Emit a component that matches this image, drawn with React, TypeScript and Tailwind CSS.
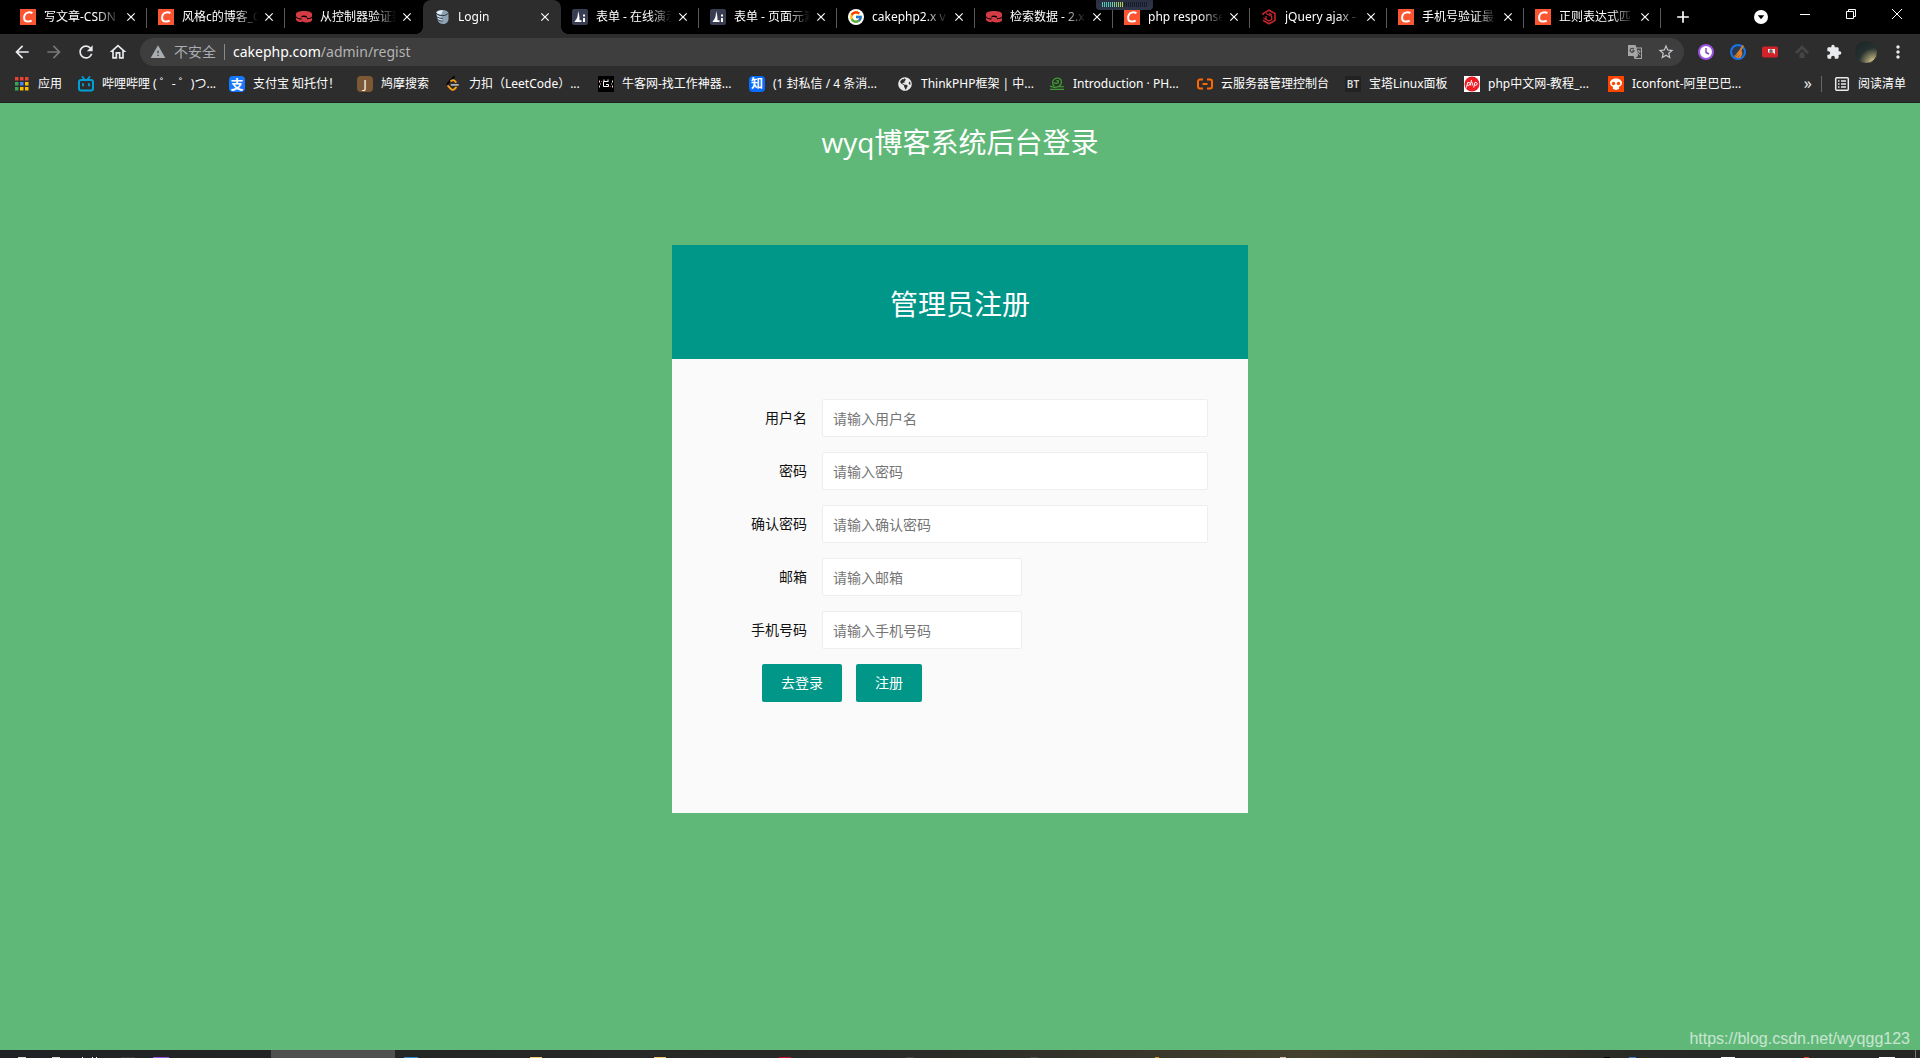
import type { ReactNode } from "react";
import {
  MdArrowBack,
  MdArrowForward,
  MdRefresh,
  MdOutlineHome,
  MdWarning,
  MdStarBorder,
  MdExtension,
  MdMoreVert,
  MdAdd,
  MdClose,
} from "react-icons/md";
import { FcGoogle } from "react-icons/fc";
import { FaGlobeAmericas } from "react-icons/fa";

const svg = "block size-4 shrink-0";

function CsdnIcon() {
  return (
    <svg viewBox="0 0 16 16" className={svg}>
      <rect width="16" height="16" fill="#fc5531" />
      <path d="M12.400 4.300C11.200 3.400 9.300 3.100 7.700 3.600 5.400 4.300 4.100 6.300 4.100 8.700c0 2.400 1.700 3.900 4.100 3.900 1.300 0 2.500-.3 3.500-.9" fill="none" stroke="#fff" strokeWidth="2" />
    </svg>
  );
}

function CakeIcon() {
  return (
    <svg viewBox="0 0 16 16" className={svg}>
      <path d="M0 5c0-2 3.500-3 8-3s8 1 8 3v2.500c-1 1.300-3 1.700-5 1.600V7.200C9 6.300 6.500 6.300 5.500 7v2.500C2.500 9.300 0 8.500 0 7z" fill="#d33c44" />
      <path d="M0 8.700c1.500 1.300 3.500 1.700 5.500 1.800V8.200c2-.5 4-.3 5.500.5v1.500c2 0 4-.4 5-1.400v2.200c0 1.800-3 2.500-6 2.500-2 0-2.500-1.200-4.500-1V13.300C2.500 13 0 12.200 0 10.500z" fill="#d33c44" />
    </svg>
  );
}

function StackIcon() {
  return (
    <svg viewBox="0 0 16 16" className={svg}>
      <path d="M2 4c0-2 3-3 6.500-3S14 2.500 14.500 4v6c0 2.500-2 5-5 5-3.500 0-5-1.500-6-4z" fill="#8fa2b5" />
      <path d="M2 4c1.500 2 4 2.500 6.500 2.500S13 6 14.500 4M2.300 7c2 1.800 4 2.300 6.200 2.300M3.200 10c1.500 1.500 3.500 2 5.300 2" fill="none" stroke="#26313d" strokeWidth="1" />
      <path d="M2.500 3.500C4 1.500 7 1 9 1.500L7 5.500C5 5.500 3 4.700 2.500 3.500zM3 6c1.500 1 3 1.500 4.500 1.700v1C5.500 8.500 4 8 3 7zM4 9c1 .8 2.500 1.300 4 1.400v1C6.500 11.300 5 10.800 4 10z" fill="#e6edf3" />
    </svg>
  );
}

function LayuiIcon() {
  return (
    <svg viewBox="0 0 16 16" className={svg}>
      <rect width="16" height="16" rx="2" fill="#393d52" />
      <path d="M6 2c1 2.500 1.700 6 1.500 9.300H9.500V13H2.500c.3-1.200 1.700-2 2.500-4 .8-2 1-4.500 1-7z" fill="#fff" />
      <path d="M11 5.500h2v2h-2zM11 9h2v4h-2z" fill="#fff" />
    </svg>
  );
}

function HexIcon() {
  return (
    <svg viewBox="0 0 16 16" className={svg} fill="none" stroke="#c8262c">
      <path d="M2 6V4.600L8 1.200l6 3.400v6.800l-6 3.400-6-3.400" strokeWidth="1.600" />
      <path d="M5 4.500l5.700 3v3L8 12l-5.500-3M8 4.200L11 6M5 7v3" strokeWidth="1.300" />
    </svg>
  );
}

function AppsIcon() {
  const colors = ["#ea4335", "#ea4335", "#ea4335", "#34a853", "#4285f4", "#fbbc04", "#34a853", "#fbbc04", "#fbbc04"];
  return (
    <svg viewBox="0 0 16 16" className={svg}>
      {colors.map((c, i) => (
        <rect key={i} x={1 + (i % 3) * 5} y={1 + Math.floor(i / 3) * 5} width="3.500" height="3.500" fill={c} />
      ))}
    </svg>
  );
}

function BilibiliIcon() {
  return (
    <svg viewBox="0 0 16 16" className={svg} fill="none" stroke="#00a1d6" strokeWidth="2" strokeLinecap="round">
      <rect x="1" y="4" width="14" height="10.500" rx="2" />
      <path d="M4.500 1l2 2.500M11.500 1l-2 2.500M5 8v1.500M11 8v1.500" strokeWidth="1.800" />
    </svg>
  );
}

function Badge({ className, children }: { className: string; children: ReactNode }) {
  return <span className={`flex size-4 shrink-0 items-center justify-center leading-none ${className}`}>{children}</span>;
}

function LeetIcon() {
  return (
    <svg viewBox="0 0 16 16" className={svg} fill="none" strokeWidth="1.800" strokeLinecap="round">
      <path d="M9 1L3 7.200c-.8.900-.8 1.700 0 2.600" stroke="#000" />
      <path d="M3 9.800L6 13c1 1 2.500 1 3.500 0l1.500-1.500M6 5c1.500-1.300 3-1 4 .2l.8.800" stroke="#ffa116" />
      <path d="M6.500 8.800H13" stroke="#b3b3b3" />
    </svg>
  );
}

function NowcoderIcon() {
  return (
    <svg viewBox="0 0 16 16" className={svg} fill="none" stroke="#fff" strokeWidth="1">
      <rect width="16" height="16" fill="#000" stroke="none" />
      <path d="M10.500 5.500h-5v5h5v-2H8M6 3.500v1.500M10 3.500v1.500" />
      <path d="M1.500 4.500v2M2.500 7.500v1M1.500 9.500v2M14.500 4.500v2M13.500 7.500v1M14.500 9.500v2" stroke="#ddd" />
      <path d="M3.500 5v1M12.500 10v1" stroke="#e33" />
    </svg>
  );
}

function PhpGuideIcon() {
  return (
    <svg viewBox="0 0 16 16" className={svg} fill="none" stroke="#3f9c35" strokeWidth="1.300">
      <path d="M5.500 10C2.800 8.500 3 4.500 5.500 3 8.500 1 12.500 2.500 12.500 6c0 2-1 3.200-2.500 4M5 6.500c1.500 1.500 4.500 1 4.500-.7C9.500 4.500 8 4.300 7.500 5.300" />
      <path d="M1 10.500c2-.5 3 .8 5 .8s2.500-.8 4-.8 2.500.8 5 0M1 13.300h14" />
    </svg>
  );
}

function AliyunIcon() {
  return (
    <svg viewBox="0 0 16 16" className={svg} fill="none" stroke="#ff6a00" strokeWidth="2">
      <path d="M6 3.500H3A2 2 0 0 0 1 5.500v5a2 2 0 0 0 2 2h3M10 3.500h3a2 2 0 0 1 2 2v5a2 2 0 0 1-2 2h-3M5.500 8h5" />
    </svg>
  );
}

function PhpCnIcon() {
  return (
    <svg viewBox="0 0 16 16" className={svg}>
      <rect width="16" height="16" fill="#fff" />
      <circle cx="8" cy="8" r="7.500" fill="#ee1c25" />
      <g fill="none" stroke="#fff" strokeWidth="1">
        <path d="M2.500 11.500l1.200-5h1.600c1.200.3.700 2.800-.7 2.800H3.400M7.500 4l-1.200 5.500M7 6.700c1-.5 1.800-.3 1.600.8L8.200 9.500M9.700 11.500l1.200-5h1.600c1.200.3.700 2.800-.7 2.800h-1.200" />
      </g>
    </svg>
  );
}

function IconfontIcon() {
  return (
    <svg viewBox="0 0 16 16" className={svg}>
      <rect width="16" height="16" fill="#ff4400" />
      <path d="M8 2.500c3.300 0 6 1.800 6 4.500 0 2-1.500 3.300-3 3.700V13L8 14l-3-1v-2.300C3.500 10.300 2 9 2 7c0-2.700 2.700-4.500 6-4.500z" fill="#fff" />
      <circle cx="5.500" cy="7.500" r="1.700" fill="#ff4400" />
      <circle cx="10.500" cy="7.500" r="1.700" fill="#ff4400" />
    </svg>
  );
}

function ReadingListIcon() {
  return (
    <svg viewBox="0 0 16 16" className={svg} fill="none" stroke="#e8eaed" strokeWidth="1.500">
      <rect x="1.700" y="1.700" width="12.600" height="12.600" rx="1" />
      <path d="M4 5h1.500M4 8h1.500M4 11h1.500M7 5h5M7 8h5M7 11h5" />
    </svg>
  );
}

function TranslateIcon() {
  return (
    <svg viewBox="0 0 16 16" className={svg}>
      <path d="M1 1h7.500l1 2.500H15V15H7.500l-1-3H1z" fill="#a6a6a6" />
      <path d="M9.700 4.500H14V14H8.500l2.500-2z" fill="#3e3e3e" />
      <path d="M6.800 5.200a2 2 0 1 0 .3 1.500H5.300" fill="none" stroke="#3e3e3e" strokeWidth="1.100" />
      <path d="M9.700 7h3.800M11.500 6v1M12.800 7c-.3 1.500-1.300 2.700-2.500 3.500M10.300 8c.6 1.300 1.700 2.500 3 3.300" fill="none" stroke="#a6a6a6" strokeWidth=".9" />
    </svg>
  );
}

function ClockExtension() {
  return (
    <svg viewBox="0 0 16 16" className={svg}>
      <circle cx="8" cy="8" r="7" fill="#fff" stroke="#9b51e0" strokeWidth="2" />
      <path d="M8 4v4.500l3 1.500" fill="none" stroke="#7a3fc0" strokeWidth="1.400" />
    </svg>
  );
}

function BroomExtension() {
  return (
    <svg viewBox="0 0 16 16" className={svg}>
      <circle cx="8" cy="8" r="7" fill="#2a3a50" stroke="#1a73e8" strokeWidth="2" />
      <path d="M12.500 1l1.500 1-2.500 4.500c1.500 2 1 5-1.200 7.500-2.500.3-4.800-.3-6.300-2 2.300-.7 3-4 5-5.500z" fill="#d9822b" />
      <path d="M5.500 12l2-1.500M8 13.300l1.500-2" stroke="#8a4a12" strokeWidth=".8" />
    </svg>
  );
}

function RedExtension() {
  return (
    <svg viewBox="0 0 16 16" className={svg}>
      <rect y="2.500" width="16" height="11" rx="2" fill="#d2232a" />
      <path d="M6 5h7v5.500l-2-2H6z" fill="#e8e8e8" />
      <circle cx="9" cy="7" r="1.800" fill="#666" />
    </svg>
  );
}

function UpExtension() {
  return (
    <svg viewBox="0 0 16 16" className={svg}>
      <path d="M8 1l7 7-2 2-5-5-5 5-2-2zM5.500 10L8 7.500l2.500 2.500v4h-5z" fill="#454545" />
    </svg>
  );
}

const tabs: { title: string; icon: ReactNode; width: string; active?: boolean; divider?: boolean }[] = [
  { title: "写文章-CSDN", icon: <CsdnIcon />, width: "w-[138px]", divider: true },
  { title: "风格c的博客_C", icon: <CsdnIcon />, width: "w-[138px]", divider: true },
  { title: "从控制器验证数", icon: <CakeIcon />, width: "w-[138px]" },
  { title: "Login", icon: <StackIcon />, width: "w-[138px]", active: true },
  { title: "表单 - 在线演示", icon: <LayuiIcon />, width: "w-[138px]", divider: true },
  { title: "表单 - 页面元素", icon: <LayuiIcon />, width: "w-[138px]", divider: true },
  { title: "cakephp2.x v", icon: <FcGoogle className="size-4 shrink-0 rounded-full bg-white p-px" />, width: "w-[138px]", divider: true },
  { title: "检索数据 - 2.x", icon: <CakeIcon />, width: "w-[138px]", divider: true },
  { title: "php response", icon: <CsdnIcon />, width: "w-[137px]", divider: true },
  { title: "jQuery ajax -", icon: <HexIcon />, width: "w-[137px]", divider: true },
  { title: "手机号验证最", icon: <CsdnIcon />, width: "w-[137px]", divider: true },
  { title: "正则表达式匹", icon: <CsdnIcon />, width: "w-[137px]", divider: true },
];

const bookmarks: { title: string; icon: ReactNode; width: string }[] = [
  { title: "应用", icon: <AppsIcon />, width: "w-16" },
  { title: "哔哩哔哩 ( ゜- ゜)つ...", icon: <BilibiliIcon />, width: "w-[151px]" },
  { title: "支付宝 知托付！", icon: <Badge className="rounded-sm bg-[#1677ff] text-[13px] font-bold">支</Badge>, width: "w-32" },
  { title: "鸠摩搜索", icon: <Badge className="rounded-sm bg-[#7d5835] text-[13px]">J</Badge>, width: "w-[88px]" },
  { title: "力扣（LeetCode）...", icon: <LeetIcon />, width: "w-[153px]" },
  { title: "牛客网-找工作神器...", icon: <NowcoderIcon />, width: "w-[151px]" },
  { title: "(1 封私信 / 4 条消...", icon: <Badge className="rounded-sm bg-[#0a6cff] text-xs font-bold">知</Badge>, width: "w-[148px]" },
  { title: "ThinkPHP框架 | 中...", icon: <FaGlobeAmericas className="size-4 shrink-0 p-px text-[#e8e8e8]" />, width: "w-[152px]" },
  { title: "Introduction · PH...", icon: <PhpGuideIcon />, width: "w-[148px]" },
  { title: "云服务器管理控制台", icon: <AliyunIcon />, width: "w-[148px]" },
  { title: "宝塔Linux面板", icon: <Badge className="bg-[#222] text-[10px] font-semibold text-[#ddd]">BT</Badge>, width: "w-[119px]" },
  { title: "php中文网-教程_...", icon: <PhpCnIcon />, width: "w-36" },
  { title: "Iconfont-阿里巴巴...", icon: <IconfontIcon />, width: "w-[136px]" },
];

const fields = [
  { id: "username", label: "用户名", hint: "请输入用户名", type: "text", size: "min-w-0 flex-1" },
  { id: "password", label: "密码", hint: "请输入密码", type: "password", size: "min-w-0 flex-1" },
  { id: "confirm", label: "确认密码", hint: "请输入确认密码", type: "password", size: "min-w-0 flex-1" },
  { id: "email", label: "邮箱", hint: "请输入邮箱", type: "text", size: "w-[200px]" },
  { id: "phone", label: "手机号码", hint: "请输入手机号码", type: "text", size: "w-[200px]" },
];

const taskbarMarks = [
  { x: 18, w: 8, c: "#ddd" }, { x: 52, w: 8, c: "#ddd" }, { x: 82, w: 1, c: "#fff" }, { x: 92, w: 1, c: "#fff" },
  { x: 96, w: 1, c: "#fff" }, { x: 121, w: 14, c: "#3a3a3c" }, { x: 153, w: 16, c: "#9a55e0" }, { x: 404, w: 14, c: "#2a8ad4" },
  { x: 530, w: 12, c: "#f0cd6a" }, { x: 654, w: 12, c: "#f0cd6a" }, { x: 779, w: 12, c: "#c8102e" }, { x: 906, w: 8, c: "#444" },
  { x: 1030, w: 8, c: "#4a4a44" }, { x: 1155, w: 4, c: "#e08a2a" }, { x: 1280, w: 6, c: "#d8c0b8" }, { x: 1604, w: 6, c: "#000" },
  { x: 1629, w: 7, c: "#3a7bd5" }, { x: 1721, w: 14, c: "#fff" }, { x: 1804, w: 5, c: "#e0461e" }, { x: 1879, w: 16, c: "#fff" },
];

function TabStrip() {
  return (
    <div className="relative flex h-[34px] items-stretch bg-black pl-[9px]">
      {tabs.map((tab, i) => (
        <div
          key={i}
          className={`relative flex shrink-0 items-center pr-[9px] pl-[11px] ${tab.width} ${tab.active ? "rounded-t-lg bg-[#2d2d2d]" : ""}`}
        >
          {tab.active && (
            <>
              <span className="absolute bottom-0 -left-2 size-2 bg-[radial-gradient(circle_at_0_0,transparent_8px,#2d2d2d_8px)]" />
              <span className="absolute -right-2 bottom-0 size-2 bg-[radial-gradient(circle_at_100%_0,transparent_8px,#2d2d2d_8px)]" />
            </>
          )}
          {tab.icon}
          <span className="mr-1 ml-2 min-w-0 flex-1 overflow-hidden whitespace-nowrap [mask-image:linear-gradient(to_right,#000_70%,transparent_100%)]">
            {tab.title}
          </span>
          <button type="button" aria-label="关闭" className="shrink-0">
            <MdClose className="size-3.5" />
          </button>
          {tab.divider && <span className="absolute top-2 right-0 h-5 w-px bg-[#5a5a5a]" />}
        </div>
      ))}
      <button type="button" aria-label="新标签页" className="ml-3 self-center">
        <MdAdd className="size-5" />
      </button>
      <div className="ml-auto flex items-center">
        <button type="button" aria-label="搜索标签页" className="mr-[9px] flex w-6 justify-center">
          <svg viewBox="0 0 14 14" className="size-3.5">
            <circle cx="7" cy="7" r="7" fill="#fff" />
            <path d="M3.800 5.200h6.400L7 9.200z" fill="#000" />
          </svg>
        </button>
        <button type="button" aria-label="最小化" className="flex h-7 w-[46px] items-center justify-center self-start">
          <svg viewBox="0 0 10 10" className="size-2.5"><path d="M0 5.500h10" stroke="#fff" /></svg>
        </button>
        <button type="button" aria-label="还原" className="flex h-7 w-[46px] items-center justify-center self-start">
          <svg viewBox="0 0 10 10" className="size-2.5" fill="none" stroke="#fff"><path d="M.5 2.500h7v7h-7zM2.500 2.500v-2h7v7h-2" /></svg>
        </button>
        <button type="button" aria-label="关闭窗口" className="flex h-7 w-[46px] items-center justify-center self-start">
          <svg viewBox="0 0 10 10" className="size-2.5" stroke="#fff"><path d="M0 0l10 10M10 0L0 10" /></svg>
        </button>
      </div>
      <div className="absolute top-0 left-[1096px] h-[10px] w-[57px] rounded-b-sm bg-gradient-to-b from-[#2a3042] to-[#30364a] pt-0.5 pl-1.5">
        <svg viewBox="0 0 46 5" className="h-[5px] w-[46px]">
          {Array.from({ length: 23 }, (_, i) => (
            <rect key={i} x={i * 2} width="1" height="5" fill={i < 5 ? "#4cc9b0" : i < 8 ? "#7ccf8a" : i < 11 ? "#b5c94e" : "#161b28"} />
          ))}
        </svg>
      </div>
    </div>
  );
}

function Toolbar() {
  return (
    <div className="flex h-9 items-center pr-3 pl-3">
      <div className="flex items-center gap-3 text-[#e8eaed]">
        <button type="button" aria-label="后退"><MdArrowBack className="size-5" /></button>
        <button type="button" aria-label="前进" className="text-[#777]"><MdArrowForward className="size-5" /></button>
        <button type="button" aria-label="刷新"><MdRefresh className="size-5" /></button>
        <button type="button" aria-label="主页"><MdOutlineHome className="size-5" /></button>
      </div>
      <div className="ml-3 flex h-7 min-w-0 flex-1 items-center rounded-full bg-[#3e3e3e] pr-[9px] pl-[10px] text-sm">
        <MdWarning className="size-4 shrink-0 text-[#a9adb2]" />
        <span className="ml-2 text-[#a9adb2]">不安全</span>
        <span className="mx-2 h-4 w-px bg-[#8a8a8a]" />
        <a href="#regist" className="text-[#b4b4b4]">
          <span className="text-white">cakephp.com</span>/admin/regist
        </a>
        <span className="ml-auto flex items-center gap-3.5">
          <button type="button" aria-label="翻译"><TranslateIcon /></button>
          <button type="button" aria-label="收藏"><MdStarBorder className="size-[18px] text-[#c4c7cb]" /></button>
        </span>
      </div>
      <div className="ml-3.5 flex items-center gap-4">
        <ClockExtension />
        <BroomExtension />
        <RedExtension />
        <UpExtension />
        <MdExtension className="size-4 shrink-0 text-[#e8eaed]" />
      </div>
      <span className="ml-3 size-6 rounded-full border border-[#2d2d2d] bg-[radial-gradient(circle_at_85%_100%,#f0e2a0_0%,#8a8462_25%,#25302f_52%,#1b2426_100%)]" />
      <button type="button" aria-label="菜单" className="ml-[10px]"><MdMoreVert className="size-5 text-[#e8eaed]" /></button>
    </div>
  );
}

function Bookmarks() {
  return (
    <nav className="flex h-[33px] items-center border-b border-[#1f1f1f] pr-3.5 pb-1 pl-3.5">
      {bookmarks.map((b) => (
        <a key={b.title} href="#bookmark" className={`flex shrink-0 items-center gap-2 whitespace-nowrap ${b.width}`}>
          {b.icon}
          {b.title}
        </a>
      ))}
      <span className="ml-auto pb-0.5 text-base leading-4 text-[#e8eaed]">»</span>
      <span className="mr-3 ml-[9px] h-4 w-px bg-[#666]" />
      <button type="button" className="flex items-center gap-2 whitespace-nowrap">
        <ReadingListIcon />
        阅读清单
      </button>
    </nav>
  );
}

function RegisterCard() {
  return (
    <section className="mx-auto w-[30%] min-w-[480px] bg-[#fafafa]">
      <h2 className="flex h-[114px] items-center justify-center bg-[#009688] pt-1 text-[28px] text-white">管理员注册</h2>
      <form className="flex min-h-[454px] flex-col gap-[15px] p-10 text-sm text-[#111]" onSubmit={(e) => e.preventDefault()}>
        {fields.map((f) => (
          <div key={f.id} className="flex items-center">
            <label htmlFor={f.id} className="w-[110px] shrink-0 pr-[15px] text-right">{f.label}</label>
            <input
              id={f.id}
              type={f.type}
              placeholder={f.hint}
              className={`h-[38px] rounded-xs border border-[#eee] bg-white px-[10px] placeholder:text-[#757575] ${f.size}`}
            />
          </div>
        ))}
        <div className="ml-[50px] flex gap-3.5 text-white">
          <button type="button" className="h-[38px] rounded-xs bg-[#009688] px-[19px]">去登录</button>
          <button type="submit" className="h-[38px] rounded-xs bg-[#009688] px-[19px]">注册</button>
        </div>
      </form>
    </section>
  );
}

function Taskbar() {
  return (
    <footer className="h-2 bg-gradient-to-r from-[#202124] via-[#2b2b28] via-50% to-[#262624]">
      <svg className="block h-2 w-full">
        <defs>
          <linearGradient id="glow">
            <stop offset="0" stopColor="#45412e" stopOpacity="0" />
            <stop offset=".5" stopColor="#45412e" />
            <stop offset="1" stopColor="#45412e" stopOpacity="0" />
          </linearGradient>
        </defs>
        <rect x="950" width="700" height="8" fill="url(#glow)" />
        <rect x="271" width="124" height="8" fill="#505050" />
        {taskbarMarks.map((m) => (
          <rect key={m.x} x={m.x} y="7" width={m.w} height="1" fill={m.c} />
        ))}
        <rect x="1915" width="1" height="8" fill="#777" />
      </svg>
    </footer>
  );
}

export default function App() {
  return (
    <div className="flex min-h-screen flex-col overflow-x-hidden bg-[#5fb878] font-['Open_Sans','Noto_Sans_CJK_SC',sans-serif]">
      <header className="bg-[#2d2d2d] font-['Noto_Sans','Noto_Sans_CJK_SC',sans-serif] text-xs text-white">
        <TabStrip />
        <Toolbar />
        <Bookmarks />
      </header>
      <main className="relative flex-1">
        <h1 className="mb-16 text-center text-[28px] leading-[78px] text-white">wyq博客系统后台登录</h1>
        <RegisterCard />
        <a href="#blog" className="absolute right-[10px] bottom-0 font-['Liberation_Sans',sans-serif] text-base leading-[22px] text-white/65">
          https://blog.csdn.net/wyqgg123
        </a>
      </main>
      <Taskbar />
    </div>
  );
}
